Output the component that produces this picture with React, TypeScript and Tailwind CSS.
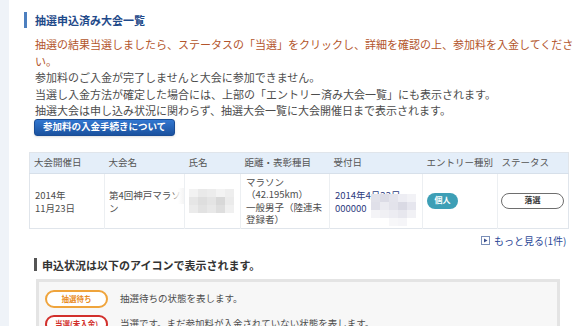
import React from 'react'

const font = { fontFamily: '"Noto Sans CJK JP", "Noto Sans", sans-serif' }

const cols = [
  { label: '大会開催日', w: 'w-[75px]' },
  { label: '大会名', w: 'w-[80px]' },
  { label: '氏名', w: 'w-[56px]' },
  { label: '距離・表彰種目', w: 'w-[89px]' },
  { label: '受付日', w: 'w-[93px]' },
  { label: 'エントリー種別', w: 'w-[75px]' },
  { label: 'ステータス', w: 'w-[71px]' },
]

function Blur({ shades }: { shades: string[][] }) {
  return (
    <div className="flex flex-col">
      {shades.map((row, i) => (
        <div key={i} className="flex">
          {row.map((c, j) => (
            <div key={j} className={`h-[8px] w-[9px] ${c}`} />
          ))}
        </div>
      ))}
    </div>
  )
}

export default function App() {
  return (
    <div className="flex h-[326px] w-[580px] overflow-hidden bg-white text-[#4d4d4d]" style={font}>
      {/* left gutter */}
      <div className="w-[9px] shrink-0 bg-[#eff3f8]" />

      <div className="flex min-w-0 flex-1 flex-col">
        {/* title */}
        <div className="ml-[15px] mt-[12px] flex h-[16px] shrink-0 items-center gap-[8px]">
          <div className="h-[16px] w-[3px] bg-[#4d7fbf]" />
          <h2 className="text-[11px] font-bold leading-[16px] text-[#1f4a8a]">抽選申込済み大会一覧</h2>
        </div>

        <div className="ml-[26px] mt-[8px] w-[545px] shrink-0 text-[11px] leading-[16.5px]">
          <p className="text-[#b3552b]">
            抽選の結果当選しましたら、ステータスの「当選」をクリックし、詳細を確認の上、参加料を入金してください。
          </p>
          <p>参加料のご入金が完了しませんと大会に参加できません。</p>
          <p>当選し入金方法が確定した場合には、上部の「エントリー済み大会一覧」にも表示されます。</p>
          <p>抽選大会は申し込み状況に関わらず、抽選大会一覧に大会開催日まで表示されます。</p>
        </div>

        <div className="ml-[25px] shrink-0">
          <button className="flex h-[17px] w-[141px] items-center justify-center rounded-[3px] border border-[#1a4c94] bg-gradient-to-b from-[#3277d0] to-[#1a519f] text-[9.5px] font-bold leading-none text-white shadow-sm">
            参加料の入金手続きについて
          </button>
        </div>

        {/* table */}
        <table className="ml-[20px] mt-[16px] w-[539px] shrink-0 table-fixed border-collapse border border-[#e0e5eb] text-[9.5px]">
          <thead>
            <tr className="h-[21px] bg-[#e4eef9]">
              {cols.map((c) => (
                <th
                  key={c.label}
                  className={`${c.w} whitespace-nowrap border-b border-[#d7e0ea] px-[4px] text-left font-normal text-[#555]`}
                >
                  {c.label}
                </th>
              ))}
            </tr>
          </thead>
          <tbody>
            <tr className="h-[55px] align-middle leading-[12.5px]">
              <td className="px-[5px] pt-[2px]">
                2014年
                <br />
                11月23日
              </td>
              <td className="relative overflow-hidden whitespace-nowrap border-l border-[#eceff2] px-[4px] pt-[2px]">
                第4回神戸マラソ
                <br />
                ン
                <div className="absolute right-0 top-[14px] h-[16px] w-[12px] bg-gradient-to-r from-white/0 via-white/80 to-[#f4f4f4]" />
              </td>
              <td className="border-l border-[#eceff2] px-[4px]">
                <Blur
                  shades={[
                    ['bg-[#f2f2f2]', 'bg-[#e9e9e9]', 'bg-[#ececec]', 'bg-[#f3f3f3]', 'bg-[#eeeeee]'],
                    ['bg-[#e6e6e6]', 'bg-[#dedede]', 'bg-[#e4e4e4]', 'bg-[#d8d8d8]', 'bg-[#ebebeb]'],
                    ['bg-[#ebebeb]', 'bg-[#e2e2e2]', 'bg-[#e8e8e8]', 'bg-[#dedede]', 'bg-[#f0f0f0]'],
                  ]}
                />
              </td>
              <td className="whitespace-nowrap border-l border-[#eceff2] px-[5px]">
                マラソン
                <br />
                （42.195km）
                <br />
                一般男子（陸連未
                <br />
                登録者）
              </td>
              <td className="relative whitespace-nowrap border-l border-[#eceff2] px-[5px] pt-[2px] text-[#2e3c80]">
                2014年4月22日
                <br />
                000000
                <div className="absolute left-[41px] top-[20px]">
                  <Blur
                    shades={[
                      ['bg-[#e2e2ea]', 'bg-[#dcdce6]', 'bg-[#e4e4ec]', 'bg-[#ededf3]', 'bg-[#f2f2f6]'],
                      ['bg-[#e0e0e9]', 'bg-[#ebebf1]', 'bg-[#e3e3eb]', 'bg-[#dadae4]', 'bg-[#e6e6ee]'],
                      ['bg-[#f4f4f7]', 'bg-[#f0f0f4]', 'bg-[#ececf2]', 'bg-[#e7e7ee]', 'bg-[#f1f1f5]'],
                      ['bg-white', 'bg-white', 'bg-[#f7f7f9]', 'bg-[#f5f5f8]', 'bg-white'],
                    ]}
                  />
                </div>
              </td>
              <td className="border-l border-[#eceff2] px-[4px]">
                <span className="flex h-[16px] w-[31px] items-center justify-center rounded-[8px] bg-[#3d9fb6] text-[8px] font-bold text-white">
                  個人
                </span>
              </td>
              <td className="border-l border-[#eceff2] px-[3px]">
                <span className="flex h-[16px] w-[63px] items-center justify-center rounded-full border-[1.5px] border-[#6e6e6e] text-[8px] font-bold text-[#333]">
                  落選
                </span>
              </td>
            </tr>
          </tbody>
        </table>

        <div className="ml-[472px] mt-[5px] flex h-[13px] shrink-0 items-center gap-[4px] whitespace-nowrap text-[10px] text-[#2e4a98]">
          <span className="flex h-[9px] w-[9px] items-center justify-center border border-[#7a8fb8] bg-white">
            <svg width="5" height="5" viewBox="0 0 5 5">
              <path d="M1 0.5 L4.5 2.5 L1 4.5 Z" fill="#3a4f8c" />
            </svg>
          </span>
          もっと見る(1件)
        </div>

        {/* legend */}
        <div className="ml-[25px] mt-[11px] flex h-[14px] shrink-0 items-center gap-[5px]">
          <div className="h-[13px] w-[3px] bg-[#555]" />
          <h3 className="text-[11px] font-bold leading-[14px] text-[#333]">申込状況は以下のアイコンで表示されます。</h3>
        </div>

        <div className="ml-[27px] mt-[7px] flex w-[524px] shrink-0 flex-col gap-[7px] border-[3px] border-[#e4e4e4] bg-[#f7f7f7] px-[6px] pt-[8px] pb-[8px] text-[9.5px]">
          <div className="flex items-center gap-[12px]">
            <span className="flex h-[18px] w-[63px] items-center justify-center rounded-full border-2 border-[#efa43c] bg-white text-[7.5px] font-bold text-[#e88a22]">
              抽選待ち
            </span>
            <span>抽選待ちの状態を表します。</span>
          </div>
          <div className="flex items-center gap-[12px]">
            <span className="flex h-[18px] w-[63px] items-center justify-center rounded-full border-2 border-[#d2302c] bg-white text-[7.5px] font-bold text-[#d2302c]">
              当選(未入金)
            </span>
            <span>当選です。まだ参加料が入金されていない状態を表します。</span>
          </div>
        </div>
      </div>
    </div>
  )
}
